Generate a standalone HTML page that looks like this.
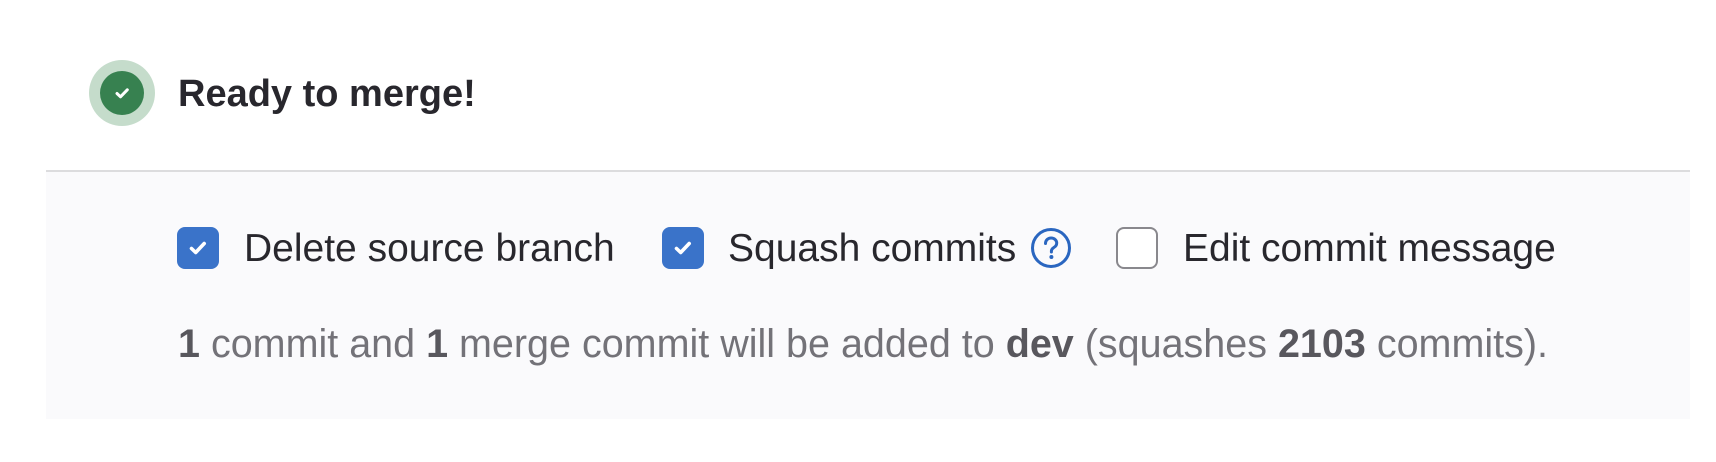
<!DOCTYPE html>
<html><head><meta charset="utf-8"><style>
html,body{margin:0;padding:0;}
body{width:1716px;height:462px;background:#fff;position:relative;overflow:hidden;font-family:"Liberation Sans",Arial,sans-serif;}
.abs{position:absolute;white-space:nowrap;line-height:1;}
.cb{position:absolute;width:42px;height:42px;border-radius:8px;box-sizing:border-box;}
.on{background:#3a73c9;}
.off{background:#fff;border:2px solid #89888d;}
.t{color:#28272d;font-size:39px;}
b{font-weight:bold;color:#58575d;}
</style></head><body>
<div style="position:absolute;left:89px;top:60px;width:66px;height:66px;border-radius:50%;background:#c5dccb;"></div>
<div style="position:absolute;left:100px;top:71px;width:44px;height:44px;border-radius:50%;background:#378150;"></div>
<svg style="position:absolute;left:100px;top:71px" width="44" height="44" viewBox="0 0 44 44"><path d="M17 22.5l3.5 3.3 6.8-7" fill="none" stroke="#fff" stroke-width="3" stroke-linecap="round" stroke-linejoin="round"/></svg>
<div class="abs" style="left:178px;top:75px;font-size:38px;font-weight:bold;color:#28272d;">Ready to merge!</div>
<div style="position:absolute;left:46px;top:170px;width:1644px;height:2px;background:#dcdcde;"></div>
<div style="position:absolute;left:46px;top:172px;width:1644px;height:247px;background:#fafafc;"></div>

<div class="cb on" style="left:177px;top:227px;"></div>
<svg style="position:absolute;left:177px;top:227px" width="42" height="42" viewBox="0 0 42 42"><path d="M14.5 21.5l4.2 4 8.5-9" fill="none" stroke="#fff" stroke-width="3.6" stroke-linecap="round" stroke-linejoin="round"/></svg>
<div class="abs t" style="left:244px;top:229px;">Delete source branch</div>

<div class="cb on" style="left:662px;top:227px;"></div>
<svg style="position:absolute;left:662px;top:227px" width="42" height="42" viewBox="0 0 42 42"><path d="M14.5 21.5l4.2 4 8.5-9" fill="none" stroke="#fff" stroke-width="3.6" stroke-linecap="round" stroke-linejoin="round"/></svg>
<div class="abs t" style="left:728px;top:229px;">Squash commits</div>
<svg style="position:absolute;left:1030px;top:227px" width="42" height="42" viewBox="0 0 42 42"><circle cx="21" cy="21" r="18.5" fill="none" stroke="#2a66c0" stroke-width="3"/><path d="M15.5 16.5c0-3.3 2.5-5.5 5.6-5.5 3.2 0 5.6 2.2 5.6 5.1 0 2.3-1.3 3.5-3 4.5-1.6 1-2.3 1.8-2.3 3.6v0.8" fill="none" stroke="#2a66c0" stroke-width="3" stroke-linecap="round"/><circle cx="21.4" cy="30" r="2" fill="#2a66c0"/></svg>

<div class="cb off" style="left:1116px;top:227px;"></div>
<div class="abs t" style="left:1183px;top:229px;">Edit commit message</div>

<div class="abs" style="left:178px;top:325px;font-size:39.5px;color:#737278;"><b>1</b> commit and <b>1</b> merge commit will be added to <b>dev</b> (squashes <b>2103</b> commits).</div>
</body></html>
